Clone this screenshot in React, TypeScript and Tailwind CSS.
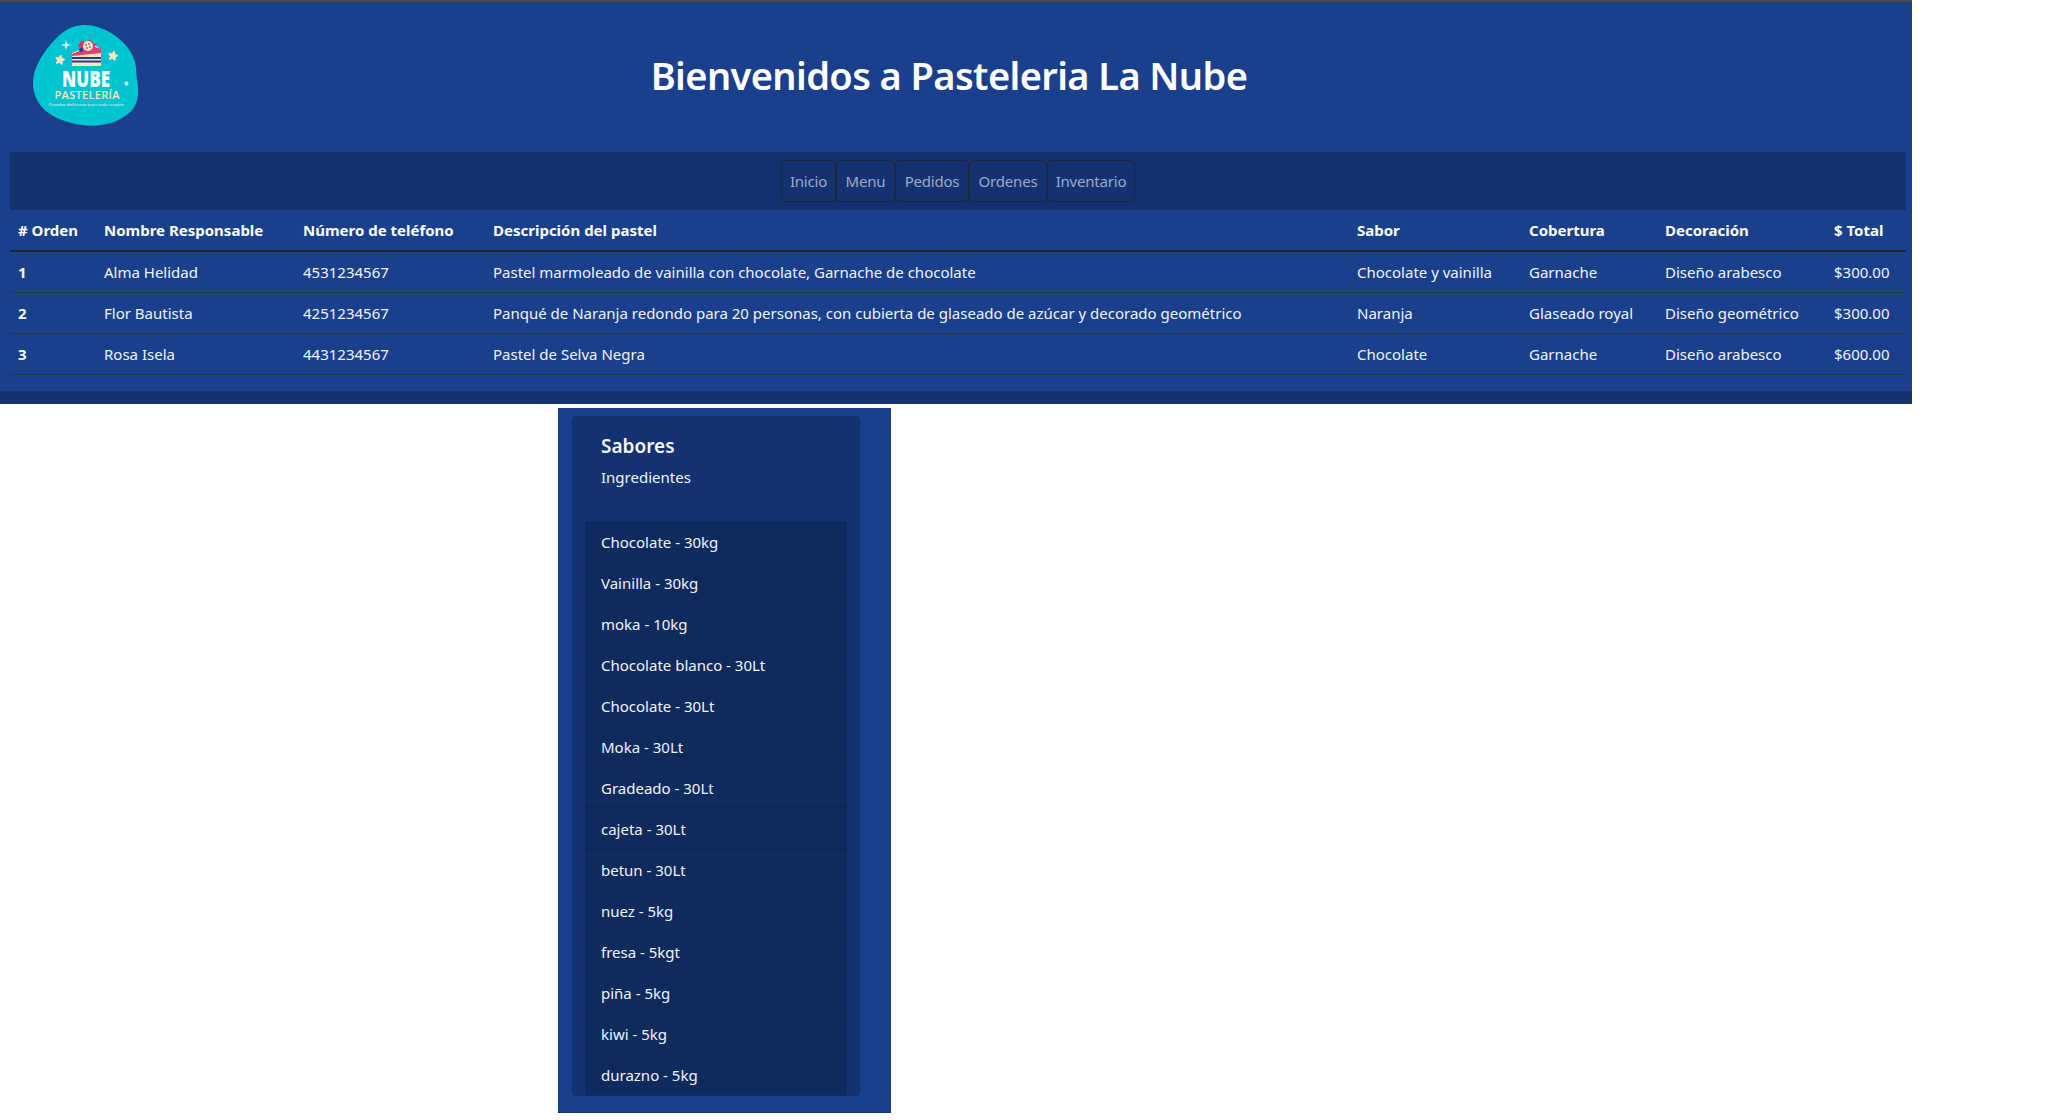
const tabs = [
  { t: "Inicio", w: "w-[55px]" },
  { t: "Menu", w: "w-[59px]" },
  { t: "Pedidos", w: "w-[74px]" },
  { t: "Ordenes", w: "w-[78px]" },
  { t: "Inventario", w: "w-[88px]" },
];
const rows = [
  ["1", "Alma Helidad", "4531234567", "Pastel marmoleado de vainilla con chocolate, Garnache de chocolate", "Chocolate y vainilla", "Garnache", "Diseño arabesco", "$300.00"],
  ["2", "Flor Bautista", "4251234567", "Panqué de Naranja redondo para 20 personas, con cubierta de glaseado de azúcar y decorado geométrico", "Naranja", "Glaseado royal", "Diseño geométrico", "$300.00"],
  ["3", "Rosa Isela", "4431234567", "Pastel de Selva Negra", "Chocolate", "Garnache", "Diseño arabesco", "$600.00"],
];
const heads = ["# Orden", "Nombre Responsable", "Número de teléfono", "Descripción del pastel", "Sabor", "Cobertura", "Decoración", "$ Total"];
const widths = ["w-[86px]", "w-[199px]", "w-[190px]", "w-[864px]", "w-[172px]", "w-[136px]", "w-[169px]", "w-[80px]"];
const items = ["Chocolate - 30kg", "Vainilla - 30kg", "moka - 10kg", "Chocolate blanco - 30Lt", "Chocolate - 30Lt", "Moka - 30Lt", "Gradeado - 30Lt", "cajeta - 30Lt", "betun - 30Lt", "nuez - 5kg", "fresa - 5kgt", "piña - 5kg", "kiwi - 5kg", "durazno - 5kg"];

function Star({ x, y, r }: { x: number; y: number; r: number }) {
  const pts: string[] = [];
  for (let i = 0; i < 10; i++) {
    const a = (Math.PI / 5) * i - Math.PI / 2 + 0.2;
    const rr = i % 2 ? r * 0.5 : r;
    pts.push(`${x + rr * Math.cos(a)},${y + rr * Math.sin(a)}`);
  }
  return <polygon points={pts.join(" ")} fill="#fbe6c4" stroke="#fbe6c4" strokeWidth="1" strokeLinejoin="round" />;
}

function Logo() {
  return (
    <svg width="106" height="102" viewBox="33 25 106 102" className="block shrink-0">
      <path d="M85 25 C105 25 130 42 135 62 C137 72 136 72 137 80 C140 95 138 108 125 116 C110 127 88 128 68 122 C50 117 33 105 33 83 C33 65 48 45 62 33 C70 27 77 25 85 25Z" fill="#00c4d0" />
      <path d="M72 53 L94 44 L101 50 L101 66 L72 66Z" fill="#fbe3c0" />
      <path d="M72 54 L92 46 L101 49 L101 53 L72 56Z" fill="#e0406f" />
      <path d="M72 57 H101 V59 H72Z M72 60.5 H101 V62.5 H72Z" fill="#1f3d8f" />
      <path d="M78 46 L82 40 L86 43 L90 39 L93 43 L97 44 L93 48 L83 50Z" fill="#d8336b" />
      <circle cx="88" cy="46" r="5" fill="#fbe3c0" />
      <circle cx="86" cy="45" r="0.8" fill="#1f3d8f" />
      <circle cx="89" cy="44" r="0.8" fill="#1f3d8f" />
      <circle cx="90" cy="47" r="0.8" fill="#1f3d8f" />
      <circle cx="87" cy="48" r="0.8" fill="#1f3d8f" />
      <circle cx="81" cy="50" r="2" fill="#1f3d8f" />
      <Star x={60} y={60} r={5} />
      <Star x={113} y={56} r={5} />
      <path d="M66 40 L67 44 L71 45 L67 46 L66 50 L65 46 L61 45 L65 44Z" fill="#ffffff" />
      <circle cx="126.500" cy="83.500" r="2" fill="#e6fbff" />
      <text x="62" y="87" fontFamily="'Open Sans', sans-serif" fontWeight="800" fontSize="22" fill="#ffffff" textLength="48" lengthAdjust="spacingAndGlyphs">NUBE</text>
      <text x="54.500" y="99" fontFamily="'Open Sans', sans-serif" fontWeight="600" fontSize="11" fill="#fbe3c0" textLength="65" lengthAdjust="spacing">PASTELERÍA</text>
      <text x="49" y="106" fontFamily="'Open Sans', sans-serif" fontSize="3.500" fill="#ffffff" textLength="75" lengthAdjust="spacingAndGlyphs">Pasteles deliciosos para toda ocasión</text>
    </svg>
  );
}

export default function App() {
  return (
    <div className="w-[2052px] bg-white font-['Noto_Sans','Open_Sans',sans-serif] text-[15px] text-[#f1f4fa]">
      <div className="w-[1912px] border-t-2 border-[#4a4a4a] bg-[#1a3f8d]">
        <header className="flex h-[150px] items-center pl-[33px] pr-[153px]">
          <div className="mb-[2px]">
            <Logo />
          </div>
          <h1 className="mb-[3px] flex-1 text-center text-[38px] font-semibold tracking-[-0.6px] text-white">Bienvenidos a Pasteleria La Nube</h1>
        </header>
        <div className="ml-[10px] mr-[6px]">
          <nav className="flex h-[58px] items-center justify-center bg-[#143271]">
            {tabs.map((tab) => (
              <a key={tab.t} className={`flex h-[42px] items-center justify-center rounded-[4px] border border-[#1f2637] tracking-[-0.2px] text-[#9dabca] ${tab.w}`}>
                {tab.t}
              </a>
            ))}
          </nav>
          <table className="mb-4 w-[1896px] table-fixed border-collapse">
            <thead>
              <tr className="h-[41px] border-b-2 border-[#212529]">
                {heads.map((h, i) => (
                  <th key={h} className={`px-2 text-left font-bold text-white ${widths[i]}`}>{h}</th>
                ))}
              </tr>
            </thead>
            <tbody>
              {rows.map((r) => (
                <tr key={r[0]} className="h-[41px] border-b border-[#2b3240]">
                  {r.map((c, i) => (
                    <td key={i} className={`whitespace-nowrap px-2 pt-px ${i === 0 ? "font-bold text-white" : ""}`}>{c}</td>
                  ))}
                </tr>
              ))}
            </tbody>
          </table>
        </div>
        <div className="h-[13px] bg-[#143271]"></div>
      </div>
      <div className="ml-[558px] mt-1 h-[705px] w-[333px] border-b border-[#143271] bg-[#1a3f8d] px-[14px] pt-2">
        <div className="h-[680px] w-[288px] rounded-[4px] border border-[#123066] bg-[#143271]">
          <div className="h-[104px] px-7 pt-[15px]">
            <h5 className="text-[19px] font-semibold leading-[28px] text-[#f4f6fb]">Sabores</h5>
            <p className="mt-[5px] leading-6">Ingredientes</p>
          </div>
          <ul className="mx-3 w-[262px]">
            {items.map((it) => (
              <li key={it} className="flex h-[41px] items-center border-b border-[#0d2553] bg-[#0f2a5c] px-4 pt-[3px] last:border-b-0">{it}</li>
            ))}
          </ul>
        </div>
      </div>
    </div>
  );
}
